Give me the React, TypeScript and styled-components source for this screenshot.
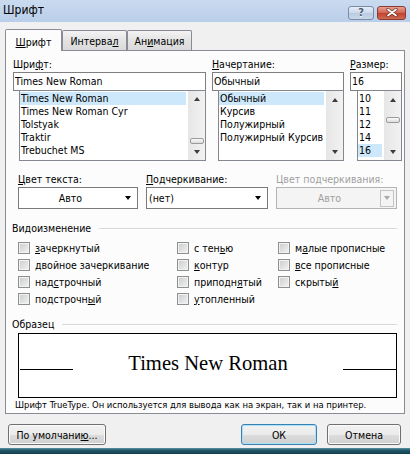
import React from 'react';
import styled, { createGlobalStyle, css } from 'styled-components';

const GlobalStyle = createGlobalStyle`
  html, body {
    margin: 0;
    padding: 0;
    background: #f0f0f0;
  }
  body {
    font-family: "DejaVu Sans Condensed", "Liberation Sans", sans-serif;
    font-size: 10.5px;
    color: #000;
  }
`;

const Window = styled.div`
  width: 410px;
  height: 454px;
  display: flex;
  flex-direction: column;
  background: #f0f0f0;
  overflow: hidden;
`;

const TitleBar = styled.div`
  flex: none;
  height: 22px;
  display: flex;
  align-items: center;
  padding: 0 4px 0 3px;
  background: linear-gradient(#cadbf0, #b9cee9);
`;

const Title = styled.span`
  font-size: 12px;
  padding-bottom: 2px;
`;

const CaptionButtons = styled.div`
  margin-left: auto;
  display: flex;
  gap: 3px;
  padding-top: 3px;
`;

const CaptionButton = styled.div<{ $close?: boolean }>`
  box-sizing: border-box;
  height: 14px;
  border-radius: 3px;
  display: flex;
  align-items: center;
  justify-content: center;
  font-weight: bold;
  font-size: 11px;
  ${(p) =>
    p.$close
      ? css`
          width: 29px;
          border: 1px solid #8c3b34;
          background: linear-gradient(#e8a191, #d0634f 50%, #c1412c 51%, #cf6a52);
        `
      : css`
          width: 26px;
          border: 1px solid #7a8ba3;
          background: linear-gradient(#e4edf8, #cbd9eb 50%, #b8cbe3 51%, #c9d8ea);
          color: #505d70;
          text-shadow: 0 1px 0 #eef3fa;
        `}
`;

const Body = styled.div`
  flex: 1;
  display: flex;
  flex-direction: column;
  padding: 0 5px;
`;

const TabRow = styled.div`
  display: flex;
  align-items: flex-end;
  height: 21px;
  margin-top: 7px;
  position: relative;
  z-index: 1;
`;

const Tab = styled.div<{ $active?: boolean; $width: number }>`
  box-sizing: border-box;
  width: ${(p) => p.$width}px;
  display: flex;
  align-items: center;
  justify-content: center;
  border: 1px solid #898c95;
  border-radius: 2px 2px 0 0;
  ${(p) =>
    p.$active
      ? css`
          height: 22px;
          margin-bottom: -1px;
          border-bottom: none;
          background: #fcfcfc;
          padding-top: 2px;
        `
      : css`
          height: 20px;
          border-bottom: none;
          background: linear-gradient(#f3f3f3, #e3e3e3 50%, #dadada);
        `}
`;

const Panel = styled.div`
  box-sizing: border-box;
  height: 364px;
  border: 1px solid #898c95;
  background: #fcfcfc;
  display: flex;
  flex-direction: column;
`;

const FontSection = styled.div`
  display: grid;
  grid-template-columns: 193px 132px 52px;
  column-gap: 6px;
  margin: 7px 0 0 7px;
`;

const Field = styled.div`
  display: flex;
  flex-direction: column;
`;

const Label = styled.div<{ $disabled?: boolean }>`
  height: 14px;
  line-height: 13px;
  white-space: nowrap;
  color: ${(p) => (p.$disabled ? '#a0a0a0' : '#000')};
`;

const Key = styled.span`
  text-decoration: underline;
  text-underline-offset: 1px;
`;

const TextBox = styled.div`
  box-sizing: border-box;
  height: 19px;
  border: 1px solid #7f7f7f;
  background: #fff;
  padding-left: 1px;
  line-height: 17px;
  white-space: nowrap;
`;

const ListBox = styled.div<{ $indent: number }>`
  box-sizing: border-box;
  height: 71px;
  margin: -1px 0 0 ${(p) => p.$indent}px;
  border: 1px solid #828790;
  background: #fff;
  display: flex;
  overflow: hidden;
`;

const Items = styled.div`
  flex: 1;
  min-width: 0;
  padding-top: 1px;
  margin-right: 2px;
`;

const Item = styled.div<{ $selected?: boolean }>`
  height: 13px;
  line-height: 13px;
  padding-left: 1px;
  white-space: nowrap;
  overflow: hidden;
  background: ${(p) => (p.$selected ? '#cde8fa' : 'transparent')};
`;

const ScrollBar = styled.div`
  flex: none;
  width: 17px;
  display: flex;
  flex-direction: column;
  background: linear-gradient(90deg, #e6e6e6, #f2f2f2);
`;

const ArrowCell = styled.div`
  height: 17px;
  display: flex;
  align-items: center;
  justify-content: center;
`;

const Arrow = styled.div<{ $up?: boolean; $color?: string }>`
  width: 0;
  height: 0;
  border-left: 3.5px solid transparent;
  border-right: 3.5px solid transparent;
  ${(p) =>
    p.$up
      ? css`border-bottom: 4px solid ${p.$color || '#3d3d3d'};`
      : css`border-top: 4px solid ${p.$color || '#3d3d3d'};`}
`;

const Track = styled.div`
  flex: 1;
  display: flex;
  flex-direction: column;
  align-items: center;
`;

const Thumb = styled.div<{ $offset: number }>`
  box-sizing: border-box;
  width: 14px;
  height: 6px;
  margin-top: ${(p) => p.$offset}px;
  border: 1px solid #9b9b9b;
  border-radius: 2px;
  background: linear-gradient(#fafafa, #dcdcdc);
`;

const ColorSection = styled.div`
  display: grid;
  grid-template-columns: 120px 122px 121px;
  column-gap: 8px;
  margin: 12px 0 0 12px;
`;

const ComboBox = styled.div<{ $disabled?: boolean }>`
  box-sizing: border-box;
  height: 22px;
  display: flex;
  align-items: center;
  border: 1px solid ${(p) => (p.$disabled ? '#b4b4b4' : '#7a7a7a')};
  background: ${(p) => (p.$disabled ? '#f4f4f4' : '#fff')};
  color: ${(p) => (p.$disabled ? '#a0a0a0' : '#000')};
`;

const ComboText = styled.div<{ $center?: boolean }>`
  flex: 1;
  padding-left: 2px;
  text-align: ${(p) => (p.$center ? 'center' : 'left')};
  white-space: nowrap;
`;

const DropButton = styled.div<{ $disabled?: boolean }>`
  box-sizing: border-box;
  width: 16px;
  height: 18px;
  margin-right: 1px;
  display: flex;
  align-items: center;
  justify-content: center;
  ${(p) =>
    p.$disabled &&
    css`
      width: 14px;
      height: 17px;
      margin-right: 2px;
      border: 1px solid #c4c4c4;
      background: #f4f4f4;
    `}
`;

const Group = styled.div<{ $top: number }>`
  margin: ${(p) => p.$top}px 7px 0 6px;
`;

const GroupHeader = styled.div`
  height: 14px;
  line-height: 13px;
  display: flex;
  align-items: center;
  gap: 8px;
  white-space: nowrap;
  &::after {
    content: '';
    flex: 1;
    height: 1px;
    background: #d8d8d8;
    box-shadow: 0 1px 0 #fff;
  }
`;

const EffectsGrid = styled.div`
  display: grid;
  grid-template-columns: 159px 101px 1fr;
  grid-template-rows: repeat(4, 17px);
  grid-auto-flow: column;
  margin: 4px 0 0 6px;
`;

const CheckRow = styled.div`
  display: flex;
  align-items: center;
  gap: 5px;
  white-space: nowrap;
`;

const CheckBox = styled.div`
  box-sizing: border-box;
  width: 12px;
  height: 12px;
  border: 1px solid #8e8f8f;
  background: linear-gradient(135deg, #c9cbce, #f3f3f3);
  box-shadow: inset 0 0 0 1px #f2f2f2;
`;

const Preview = styled.div`
  box-sizing: border-box;
  height: 65px;
  margin: 2px 0 0 6px;
  padding: 17px 0 0 1px;
  border: 1px solid #000;
  background: #fff;
  display: flex;
  align-items: baseline;
  justify-content: space-between;
`;

const Baseline = styled.div`
  width: 53px;
  height: 1px;
  background: #000;
`;

const SampleText = styled.div`
  font-family: "Liberation Serif", serif;
  font-size: 20.6px;
  line-height: 24px;
`;

const Note = styled.div`
  height: 13px;
  line-height: 13px;
  padding-left: 9px;
  font-size: 9.4px;
  white-space: nowrap;
`;

const Footer = styled.div`
  display: flex;
  gap: 10px;
  margin-top: 10px;
  padding: 0 4px 0 3px;
`;

const Button = styled.div<{ $default?: boolean; $width: number }>`
  box-sizing: border-box;
  width: ${(p) => p.$width}px;
  height: 21px;
  display: flex;
  align-items: center;
  justify-content: center;
  border-radius: 3px;
  border: 1px solid ${(p) => (p.$default ? '#3c7fb1' : '#707070')};
  background: linear-gradient(#f2f2f2, #ebebeb 50%, #dddddd 51%, #cfcfcf);
  box-shadow: inset 0 0 0 1px ${(p) => (p.$default ? '#a8e2f9' : '#fbfbfb')};
  white-space: nowrap;
  &:first-child {
    margin-right: auto;
  }
`;

const Taskbar = styled.div`
  margin-top: auto;
  height: 6px;
  background: linear-gradient(#5d97a8, #245a6b 35%, #123e4c);
`;

type Accel = [string, string, string];

const AccelText = ({ parts }: { parts: Accel }) => (
  <>
    {parts[0]}
    <Key>{parts[1]}</Key>
    {parts[2]}
  </>
);

const CloseGlyph = () => (
  <svg width="12" height="9" viewBox="0 0 12 9">
    <path d="M2 1.5 L10 7.5 M10 1.5 L2 7.5" stroke="#6b2a22" strokeWidth="3.2" strokeLinecap="round" />
    <path d="M2 1.5 L10 7.5 M10 1.5 L2 7.5" stroke="#ffffff" strokeWidth="1.8" strokeLinecap="round" />
  </svg>
);

const List = ({
  items,
  selected,
  indent,
  thumb,
}: {
  items: string[];
  selected: number;
  indent: number;
  thumb?: number;
}) => (
  <ListBox $indent={indent}>
    <Items>
      {items.map((it, i) => (
        <Item key={it} $selected={i === selected}>
          {it}
        </Item>
      ))}
    </Items>
    <ScrollBar>
      <ArrowCell>
        <Arrow $up />
      </ArrowCell>
      <Track>{thumb !== undefined && <Thumb $offset={thumb} />}</Track>
      <ArrowCell>
        <Arrow />
      </ArrowCell>
    </ScrollBar>
  </ListBox>
);

const fonts = ['Times New Roman', 'Times New Roman Cyr', 'Tolstyak', 'Traktir', 'Trebuchet MS'];
const styles = ['Обычный', 'Курсив', 'Полужирный', 'Полужирный Курсив'];
const sizes = ['10', '11', '12', '14', '16'];

const effects: Accel[] = [
  ['', 'з', 'ачеркнутый'],
  ['', 'д', 'войное зачеркивание'],
  ['над', 'с', 'трочный'],
  ['подстрочн', 'ы', 'й'],
  ['с тен', 'ь', 'ю'],
  ['', 'к', 'онтур'],
  ['приподн', 'я', 'тый'],
  ['', 'у', 'топленный'],
  ['м', 'а', 'лые прописные'],
  ['', 'в', 'се прописные'],
  ['скрыты', 'й', ''],
];

export default function App() {
  return (
    <>
      <GlobalStyle />
      <Window>
        <TitleBar>
          <Title>Шрифт</Title>
          <CaptionButtons>
            <CaptionButton>?</CaptionButton>
            <CaptionButton $close>
              <CloseGlyph />
            </CaptionButton>
          </CaptionButtons>
        </TitleBar>

        <Body>
          <TabRow>
            <Tab $active $width={57}>
              <AccelText parts={['', 'Ш', 'рифт']} />
            </Tab>
            <Tab $width={65}>
              <AccelText parts={['Интерва', 'л', '']} />
            </Tab>
            <Tab $width={65}>
              <AccelText parts={['Ан', 'и', 'мация']} />
            </Tab>
          </TabRow>

          <Panel>
            <FontSection>
              <Field>
                <Label>
                  <AccelText parts={['Шри', 'ф', 'т:']} />
                </Label>
                <TextBox>Times New Roman</TextBox>
                <List items={fonts} selected={0} indent={6} thumb={30} />
              </Field>
              <Field>
                <Label>
                  <AccelText parts={['', 'Н', 'ачертание:']} />
                </Label>
                <TextBox>Обычный</TextBox>
                <List items={styles} selected={0} indent={6} />
              </Field>
              <Field>
                <Label>
                  <AccelText parts={['', 'Р', 'азмер:']} />
                </Label>
                <TextBox>16</TextBox>
                <List items={sizes} selected={4} indent={7} thumb={9} />
              </Field>
            </FontSection>

            <ColorSection>
              <Field>
                <Label>
                  <AccelText parts={['', 'Ц', 'вет текста:']} />
                </Label>
                <ComboBox>
                  <ComboText $center>Авто</ComboText>
                  <DropButton>
                    <Arrow $color="#000" />
                  </DropButton>
                </ComboBox>
              </Field>
              <Field>
                <Label>
                  <AccelText parts={['', 'П', 'одчеркивание:']} />
                </Label>
                <ComboBox>
                  <ComboText>(нет)</ComboText>
                  <DropButton>
                    <Arrow $color="#000" />
                  </DropButton>
                </ComboBox>
              </Field>
              <Field>
                <Label $disabled>Цвет подчеркивания:</Label>
                <ComboBox $disabled>
                  <ComboText $center>Авто</ComboText>
                  <DropButton $disabled>
                    <Arrow $color="#a8a8a8" />
                  </DropButton>
                </ComboBox>
              </Field>
            </ColorSection>

            <Group $top={12}>
              <GroupHeader>Видоизменение</GroupHeader>
              <EffectsGrid>
                {effects.map((e) => (
                  <CheckRow key={e.join('')}>
                    <CheckBox />
                    <span>
                      <AccelText parts={e} />
                    </span>
                  </CheckRow>
                ))}
              </EffectsGrid>
            </Group>

            <Group $top={10}>
              <GroupHeader>Образец</GroupHeader>
              <Preview>
                <Baseline />
                <SampleText>Times New Roman</SampleText>
                <Baseline />
              </Preview>
            </Group>

            <Note>Шрифт TrueType. Он используется для вывода как на экран, так и на принтер.</Note>
          </Panel>

          <Footer>
            <Button $width={98}>
              <AccelText parts={['По умолчани', 'ю', '...']} />
            </Button>
            <Button $default $width={76}>
              ОК
            </Button>
            <Button $width={74}>Отмена</Button>
          </Footer>
        </Body>

        <Taskbar />
      </Window>
    </>
  );
}
